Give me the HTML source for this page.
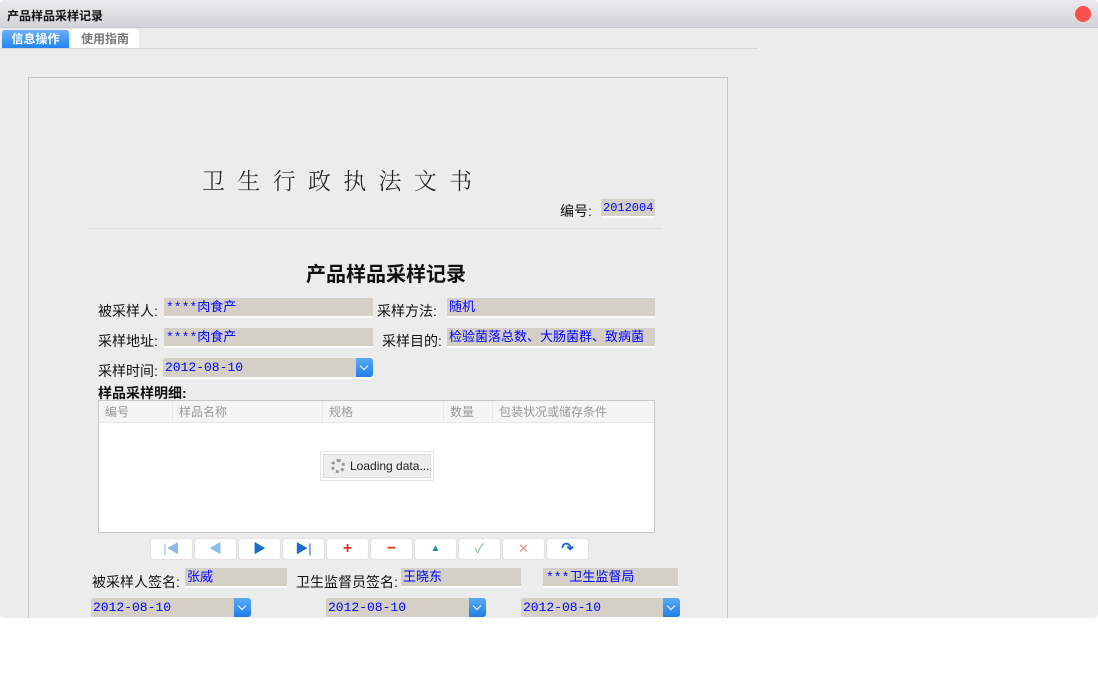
<!DOCTYPE html>
<html><head><meta charset="utf-8"><style>
*{margin:0;padding:0;box-sizing:border-box}
body{width:1098px;height:694px;background:#fff;position:relative;overflow:hidden;font-family:"Liberation Sans","Noto Sans CJK SC",sans-serif}
.a{position:absolute}
.win{left:0;top:0;width:1098px;height:618px;background:#ececec;border-radius:4px;overflow:hidden}
.tb{left:0;top:0;width:1098px;height:28px;background:linear-gradient(#ebeaec,#d3d2d6);border-bottom:1px solid #c8c8cc}
.lbl{font-size:14px;color:#111;white-space:nowrap;line-height:16px}
.in{background:#d4d0c8;border-bottom:2px solid #fafafa;color:#0000ff;font-size:13px;font-family:"Liberation Mono","Noto Sans CJK SC",monospace;padding:2px 2px;line-height:15px;white-space:nowrap}
.dd{position:absolute;right:0;top:0;width:17px;height:100%;background:linear-gradient(#5aaaf5,#1e7fe8);border-radius:0 3px 3px 0}
.dd:after{content:"";position:absolute;left:5px;top:5px;width:5px;height:5px;border-right:1.5px solid #fff;border-bottom:1.5px solid #fff;transform:rotate(45deg)}
.btn{top:538px;width:43px;height:22px;background:#fff;border:1px solid #e2e2e2;border-radius:4px;font-size:13px;text-align:center;line-height:20px}
.th{top:0;height:22px;font-size:12px;color:#999;line-height:22px;padding-left:6px;border-right:1px solid #e8e8e8}
</style></head><body>
<div class="a win">
<div class="a tb"></div>
<div class="a" style="left:7px;top:7px;font-size:12px;font-weight:bold;color:#111">产品样品采样记录</div>
<div class="a" style="left:1075px;top:6px;width:16px;height:16px;border-radius:50%;background:#fc5050"></div>
<div class="a" style="left:2px;top:30px;width:67px;height:19px;background:linear-gradient(#6ab0fb,#1e80f0);border-radius:3px 3px 0 0;color:#fff;font-size:12px;font-weight:bold;text-align:center;line-height:19px">信息操作</div>
<div class="a" style="left:71px;top:29px;width:68px;height:20px;background:#fff;border-radius:3px 3px 0 0;color:#777;font-size:12px;font-weight:bold;text-align:center;line-height:20px">使用指南</div>
<div class="a" style="left:0;top:48px;width:758px;height:1px;background:#d8d8d8"></div>
<div class="a" style="left:28px;top:77px;width:700px;height:560px;border:1px solid #c4c4c4"></div>
<div class="a" style="left:202px;top:163px;font-size:23px;letter-spacing:12.3px;color:#222;font-family:'Noto Serif CJK SC',serif;font-weight:300">卫生行政执法文书</div>
<div class="a lbl" style="left:560px;top:203px">编号:</div>
<div class="a in" style="left:601px;top:199px;width:54px;height:19px;font-size:12px">2012004</div>
<div class="a" style="left:88px;top:228px;width:574px;height:1px;background:#dcdcdc"></div>
<div class="a" style="left:306px;top:258px;font-size:20px;font-weight:bold;color:#111">产品样品采样记录</div>
<div class="a lbl" style="left:98px;top:303px">被采样人:</div>
<div class="a in" style="left:164px;top:298px;width:209px;height:20px">****肉食产</div>
<div class="a lbl" style="left:377px;top:303px">采样方法:</div>
<div class="a in" style="left:447px;top:298px;width:208px;height:20px">随机</div>
<div class="a lbl" style="left:98px;top:333px">采样地址:</div>
<div class="a in" style="left:164px;top:328px;width:209px;height:20px">****肉食产</div>
<div class="a lbl" style="left:382px;top:333px">采样目的:</div>
<div class="a in" style="left:447px;top:328px;width:208px;height:20px">检验菌落总数、大肠菌群、致病菌</div>
<div class="a lbl" style="left:98px;top:363px">采样时间:</div>
<div class="a in" style="left:163px;top:358px;width:210px;height:21px;border-radius:3px">2012-08-10<div class="dd"></div></div>
<div class="a" style="left:98px;top:383px;font-size:14px;font-weight:bold;color:#111">样品采样明细:</div>
<div class="a" style="left:98px;top:400px;width:557px;height:133px;background:#fff;border:1px solid #c8c8c8">
 <div class="a" style="left:0;top:0;width:555px;height:22px;background:#f5f5f5;border-bottom:1px solid #e6e6e6"></div>
 <div class="a th" style="left:0;width:74px">编号</div>
 <div class="a th" style="left:74px;width:150px">样品名称</div>
 <div class="a th" style="left:224px;width:121px">规格</div>
 <div class="a th" style="left:345px;width:49px">数量</div>
 <div class="a th" style="left:394px;width:161px;border:none">包装状况或储存条件</div>
 <div class="a" style="left:221px;top:50px;width:114px;height:30px;border:1px solid #e4e4e4;background:#fff;padding:2px">
  <div style="width:108px;height:24px;background:#ededed;border:1px solid #ddd;font-size:12px;line-height:22px;color:#222;padding-left:26px;position:relative">
   <span style="position:absolute;left:7px;top:4px;width:14px;height:14px;border:3px dotted #999;border-radius:50%"></span>Loading data...</div>
 </div>
</div>
<div class="a btn" style="left:150px;color:#8bbce8">|◀</div>
<div class="a btn" style="left:194px;color:#8bbce8">◀</div>
<div class="a btn" style="left:238px;color:#1a6cc8">▶</div>
<div class="a btn" style="left:282px;color:#1a6cc8">▶|</div>
<div class="a btn" style="left:326px;color:#d83a10;font-weight:bold;font-size:16px">+</div>
<div class="a btn" style="left:370px;color:#d83a10;font-weight:bold;font-size:16px">−</div>
<div class="a btn" style="left:414px;color:#1a8fa0;font-size:10px">▲</div>
<div class="a btn" style="left:458px;color:#7bb88b">✓</div>
<div class="a btn" style="left:502px;color:#ee8d8d">✕</div>
<div class="a btn" style="left:546px;color:#1a6cc8;font-weight:bold;font-size:15px">↷</div>
<div class="a lbl" style="left:92px;top:574px">被采样人签名:</div>
<div class="a in" style="left:185px;top:568px;width:102px;height:20px">张威</div>
<div class="a lbl" style="left:296px;top:574px">卫生监督员签名:</div>
<div class="a in" style="left:401px;top:568px;width:120px;height:20px">王晓东</div>
<div class="a in" style="left:543px;top:568px;width:135px;height:20px;padding-left:3px">***卫生监督局</div>
<div class="a in" style="left:91px;top:598px;width:160px;height:21px;border-radius:3px">2012-08-10<div class="dd"></div></div>
<div class="a in" style="left:326px;top:598px;width:160px;height:21px;border-radius:3px">2012-08-10<div class="dd"></div></div>
<div class="a in" style="left:521px;top:598px;width:159px;height:21px;border-radius:3px">2012-08-10<div class="dd"></div></div>
</div>
</body></html>
